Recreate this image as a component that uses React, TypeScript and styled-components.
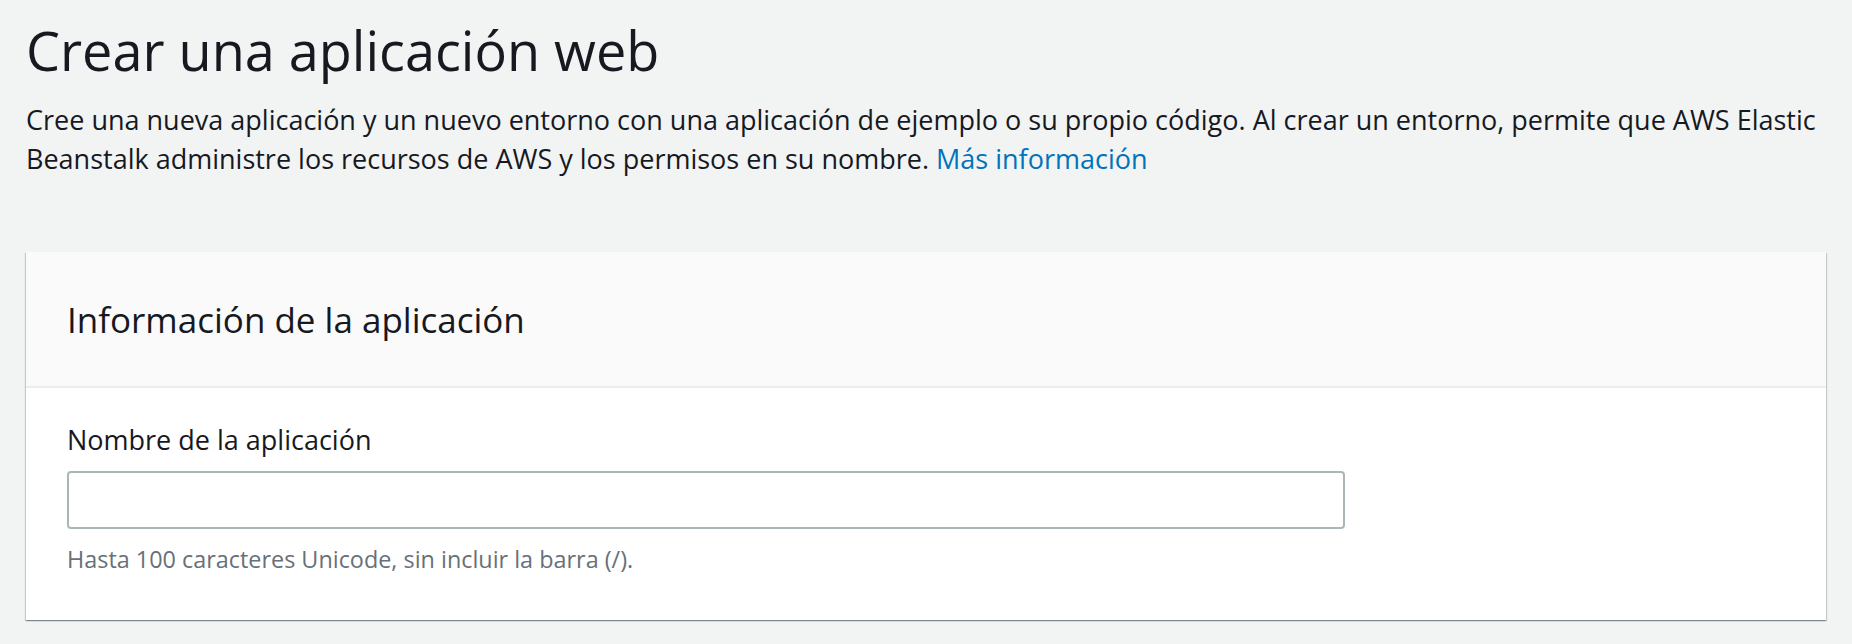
import React from "react";
import styled, { createGlobalStyle } from "styled-components";

const GlobalStyle = createGlobalStyle`
  html, body {
    margin: 0;
    padding: 0;
    background: #f2f3f3;
  }
  body {
    font-family: "Open Sans", "Noto Sans", Arial, sans-serif;
    color: #16191f;
  }
  * { box-sizing: border-box; }
`;

const Page = styled.main`
  padding: 18px 26px 24px 26px;
`;

const Title = styled.h1`
  margin: 0;
  font-size: 54px;
  line-height: 64px;
  font-weight: 400;
  color: #16191f;
`;

const Description = styled.p`
  margin: 18px 0 0 0;
  font-size: 27px;
  line-height: 39px;
  color: #16191f;
`;

const Link = styled.a`
  color: #0073bb;
  text-decoration: none;
`;

const Card = styled.section`
  margin-top: 74px;
  background: #ffffff;
  box-shadow: 0 1px 1px 0 rgba(0, 28, 36, 0.3), 1px 1px 1px 0 rgba(0, 28, 36, 0.15),
    -1px 1px 1px 0 rgba(0, 28, 36, 0.15);
`;

const CardHeader = styled.header`
  background: #fafafa;
  border-bottom: 2px solid #eaeded;
  padding: 46px 41px 44px 41px;
`;

const CardTitle = styled.h2`
  margin: 0;
  font-size: 35px;
  line-height: 44px;
  font-weight: 400;
  color: #16191f;
`;

const CardBody = styled.div`
  padding: 32px 41px 44px 41px;
`;

const Field = styled.div`
  display: flex;
  flex-direction: column;
`;

const Label = styled.label`
  font-size: 27px;
  line-height: 39px;
  color: #16191f;
`;

const Input = styled.input`
  margin-top: 12px;
  width: 1278px;
  height: 58px;
  border: 2px solid #aab7b8;
  border-radius: 4px;
  background: #ffffff;
  padding: 0 16px;
  font-size: 27px;
  font-family: inherit;
  outline: none;
`;

const Hint = styled.span`
  margin-top: 13px;
  font-size: 23.4px;
  line-height: 34px;
  color: #687078;
`;

export default function App() {
  return (
    <>
      <GlobalStyle />
      <Page>
        <Title>Crear una aplicación web</Title>
        <Description>
          Cree una nueva aplicación y un nuevo entorno con una aplicación de ejemplo o su propio
          código. Al crear un entorno, permite que AWS Elastic Beanstalk administre los recursos de
          AWS y los permisos en su nombre. <Link href="#">Más información</Link>
        </Description>
        <Card>
          <CardHeader>
            <CardTitle>Información de la aplicación</CardTitle>
          </CardHeader>
          <CardBody>
            <Field>
              <Label htmlFor="app-name">Nombre de la aplicación</Label>
              <Input id="app-name" type="text" />
              <Hint>Hasta 100 caracteres Unicode, sin incluir la barra (/).</Hint>
            </Field>
          </CardBody>
        </Card>
      </Page>
    </>
  );
}
